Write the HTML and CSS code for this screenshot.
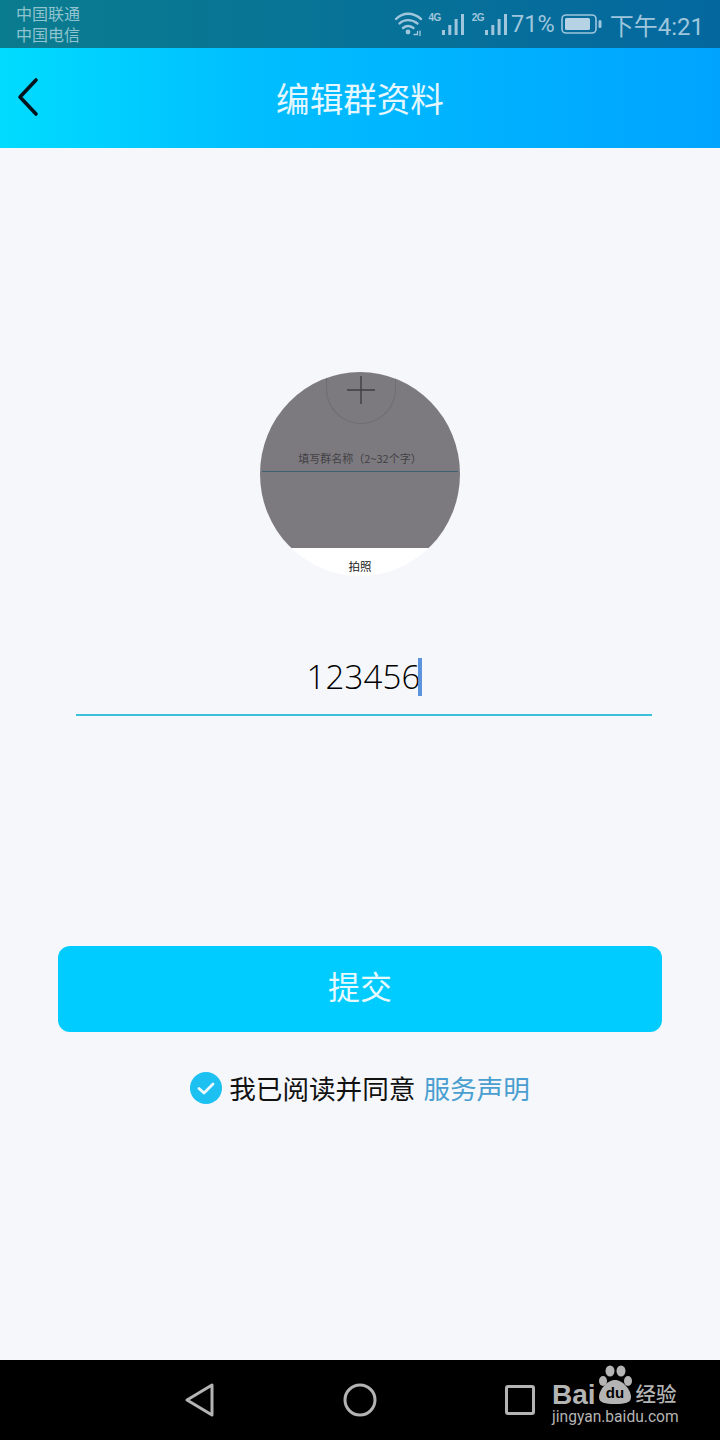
FILE: index.html
```html
<html>
	<head>
		<title>编辑群资料</title>
		<meta charset="utf-8">
		<link rel="stylesheet" href="styles.css">
	</head>
	<body>
		<div id="page">
			<div id="status-bar">
				<div class="carriers">
					<div>中国联通</div>
					<div>中国电信</div>
				</div>
				<div class="status-right">
					<svg class="wifi" width="30" height="26" viewBox="0 0 30 26" fill="none" stroke="#9fc6dc" stroke-width="2.400" stroke-linecap="round">
						<path d="M3 8C10 1 20 1 28 8"/>
						<path d="M6.500 12.500C11 8 19 8 24.500 12.500"/>
						<path d="M10 17C13 14.500 17 14.500 20.500 17"/>
						<circle cx="15" cy="21" r="2.400" fill="#9fc6dc" stroke="none"/>
						<path d="M21 23.500h3.500v-3M27 20v4.500" stroke-width="1.300"/>
					</svg>
					<div class="signal">
						<span class="net">4G</span>
						<svg width="22" height="24" viewBox="0 0 22 24" fill="#9fc6dc">
							<rect x="0" y="18" width="3" height="5"/>
							<rect x="6.300" y="13" width="3" height="10"/>
							<rect x="12.600" y="7" width="3" height="16"/>
							<rect x="19" y="2" width="3" height="21"/>
						</svg>
					</div>
					<div class="signal">
						<span class="net">2G</span>
						<svg width="22" height="24" viewBox="0 0 22 24" fill="#9fc6dc">
							<rect x="0" y="18" width="3" height="5"/>
							<rect x="6.300" y="13" width="3" height="10"/>
							<rect x="12.600" y="7" width="3" height="16"/>
							<rect x="19" y="2" width="3" height="21"/>
						</svg>
					</div>
					<span class="percent">71%</span>
					<svg class="battery" width="42" height="22" viewBox="0 0 42 22" fill="none">
						<rect x="1" y="2" width="34" height="18" rx="4" stroke="#9fc6dc" stroke-width="1.600"/>
						<rect x="4" y="5" width="25" height="12" rx="1.500" fill="#b5d3e4"/>
						<rect x="37.500" y="7" width="3" height="8" rx="1.500" fill="#9fc6dc"/>
					</svg>
					<span class="clock">下午4:21</span>
				</div>
			</div>

			<div id="header">
				<svg class="back" width="24" height="40" viewBox="0 0 24 40" fill="none" stroke="#04131c" stroke-width="3.600" stroke-linecap="round" stroke-linejoin="round">
					<path d="M20 3L4 20L20 37"/>
				</svg>
				<div class="title">编辑群资料</div>
			</div>

			<div id="content">
				<div class="avatar">
					<div class="avatar-shot">
						<div class="plus-tab">
							<svg width="28" height="28" viewBox="0 0 28 28" stroke="#3f3e42" stroke-width="1.400">
								<path d="M0 14H28M14 0V28"/>
							</svg>
						</div>
						<div class="hint">填写群名称（2~32个字）</div>
						<div class="hint-line"></div>
					</div>
					<div class="avatar-label">拍照</div>
				</div>

				<div class="name-input">
					<span class="name-value">123456</span><span class="caret"></span>
				</div>

				<div class="submit">提交</div>

				<div class="agree">
					<svg width="32" height="32" viewBox="0 0 32 32">
						<circle cx="16" cy="16" r="16" fill="#1cc1f2"/>
						<path d="M9 16.500L14 21L23 12" fill="none" stroke="#eefaff" stroke-width="2.800" stroke-linecap="round" stroke-linejoin="round"/>
					</svg>
					<span class="agree-text">我已阅读并同意</span>
					<span class="agree-link">服务声明</span>
				</div>
			</div>

			<div id="nav-bar">
				<svg class="nav-back" width="30" height="34" viewBox="0 0 30 34" fill="none" stroke="#b4b4b4" stroke-width="3" stroke-linejoin="round">
					<path d="M27 2V32L2 17Z"/>
				</svg>
				<svg class="nav-home" width="34" height="34" viewBox="0 0 34 34" fill="none" stroke="#b4b4b4" stroke-width="3">
					<circle cx="17" cy="17" r="15"/>
				</svg>
				<svg class="nav-recent" width="30" height="30" viewBox="0 0 30 30" fill="none" stroke="#b4b4b4" stroke-width="3" stroke-linejoin="round">
					<rect x="1.500" y="1.500" width="27" height="27" rx="1.500"/>
				</svg>
				<div class="baidu">
					<div class="baidu-top">
						<span class="bai">Bai</span>
						<svg class="paw" width="40" height="42" viewBox="0 0 40 42">
							<g fill="#b4b4b4">
								<ellipse cx="8" cy="16" rx="4" ry="5"/>
								<ellipse cx="15" cy="6" rx="4.500" ry="5.500"/>
								<ellipse cx="26" cy="6" rx="4.500" ry="5.500"/>
								<ellipse cx="33" cy="16" rx="4" ry="5"/>
								<path d="M20 15C12 15 4 25 4 32C4 38 10 39 20 39C30 39 36 38 36 32C36 25 28 15 20 15Z"/>
							</g>
							<text x="20" y="33" text-anchor="middle" class="paw-du">du</text>
						</svg>
						<span class="jy">经验</span>
					</div>
					<div class="baidu-url">jingyan.baidu.com</div>
				</div>
			</div>
		</div>
	</body>
</html>
```

FILE: styles.css
```css
body {
	margin: 0;
	font-family: "Noto Sans CJK SC", "Noto Sans", sans-serif;
}

#page {
	width: 720px;
	height: 1440px;
	display: flex;
	flex-direction: column;
	background-color: #f5f7fb;
	overflow: hidden;
}

#status-bar {
	height: 48px;
	flex: none;
	display: flex;
	justify-content: space-between;
	align-items: center;
	padding: 0 16px;
	background: linear-gradient(90deg, #0a7c8f, #04689f);
}

.carriers {
	font-size: 16px;
	line-height: 21px;
	color: #8fc4cf;
	margin-top: -1px;
}

.status-right {
	display: flex;
	align-items: center;
	color: #9fc6dc;
}

.wifi {
	margin-right: 5px;
}

.signal {
	display: flex;
	align-items: flex-start;
	margin-right: 8px;
}

.signal:last-of-type {
	margin-right: 4px;
}

.net {
	font-family: "Liberation Sans", sans-serif;
	font-size: 10px;
	font-weight: bold;
	line-height: 12px;
	letter-spacing: -0.5px;
	margin-right: 1px;
}

.percent {
	font-family: "Roboto", sans-serif;
	font-size: 23.500px;
	margin-right: 6px;
}

.battery {
	margin-right: 7px;
}

.clock {
	font-family: "Roboto", "Noto Sans CJK SC", sans-serif;
	font-size: 24px;
}

#header {
	height: 100px;
	flex: none;
	box-sizing: border-box;
	padding-bottom: 2px;
	position: relative;
	display: flex;
	justify-content: center;
	align-items: center;
	background: linear-gradient(90deg, #00dcff, #00beff 35%, #00a4ff);
}

.back {
	position: absolute;
	left: 16px;
	top: 29px;
}

.title {
	font-size: 33.600px;
	color: #e4f7ff;
}

#content {
	flex: 1;
	display: flex;
	flex-direction: column;
	align-items: center;
}

.avatar {
	width: 200px;
	height: 204px;
	margin-top: 224px;
	border-radius: 50%;
	background-color: #fff;
	overflow: hidden;
	display: flex;
	flex-direction: column;
}

.avatar-shot {
	height: 176px;
	flex: none;
	background-color: #7d7a7f;
	display: flex;
	flex-direction: column;
	align-items: center;
}

.plus-tab {
	width: 70px;
	height: 52px;
	flex: none;
	box-sizing: border-box;
	margin-left: 2px;
	border: 1px solid #6f6d72;
	border-top: none;
	border-radius: 0 0 35px 35px;
	display: flex;
	justify-content: center;
	padding-top: 4px;
}

.hint {
	font-size: 11px;
	line-height: 16px;
	color: #414044;
	margin-top: 26px;
}

.hint-line {
	width: 196px;
	height: 1px;
	flex: none;
	margin-top: 5px;
	background-color: #3f6070;
}

.avatar-label {
	font-size: 11.500px;
	line-height: 16px;
	color: #222;
	text-align: center;
	margin-top: 10px;
}

.name-input {
	width: 576px;
	height: 70px;
	flex: none;
	box-sizing: border-box;
	margin-top: 70px;
	margin-left: 8px;
	border-bottom: 2px solid #3cc0dc;
	display: flex;
	justify-content: center;
	align-items: flex-start;
	padding-top: 12px;
}

.name-value {
	font-family: "Open Sans", sans-serif;
	font-size: 33px;
	font-weight: 350;
	letter-spacing: 0.2px;
	line-height: 38px;
	color: #000;
}

.caret {
	width: 4px;
	height: 38px;
	margin-left: -3px;
	background-color: #5b94dc;
}

.submit {
	width: 604px;
	height: 86px;
	flex: none;
	box-sizing: border-box;
	margin-top: 230px;
	padding-bottom: 8px;
	border-radius: 12px;
	background-color: #00ccff;
	color: #e6f9ff;
	font-size: 32px;
	display: flex;
	justify-content: center;
	align-items: center;
}

.agree {
	display: flex;
	align-items: center;
	margin-top: 39px;
	font-size: 26.600px;
	line-height: 34px;
}

.agree-text {
	color: #111;
	margin-left: 7px;
}

.agree-link {
	color: #4a9fd0;
	margin-left: 8px;
}

#nav-bar {
	height: 80px;
	flex: none;
	position: relative;
	background-color: #000;
}

.nav-back {
	position: absolute;
	left: 185px;
	top: 23px;
}

.nav-home {
	position: absolute;
	left: 343px;
	top: 23px;
}

.nav-recent {
	position: absolute;
	left: 505px;
	top: 25px;
}

.baidu {
	position: absolute;
	left: 552px;
	top: 5px;
	color: #b4b4b4;
}

.baidu-top {
	display: flex;
	align-items: flex-end;
	height: 42px;
}

.bai {
	font-family: "Liberation Sans", sans-serif;
	font-weight: bold;
	font-size: 28px;
	line-height: 30px;
	margin-bottom: -3px;
}

.paw {
	margin-left: -1px;
}

.paw-du {
	font-family: "Liberation Sans", sans-serif;
	font-weight: bold;
	font-size: 15px;
	fill: #000;
}

.jy {
	font-size: 20.500px;
	font-weight: 500;
	line-height: 28px;
	margin-left: 1px;
}

.baidu-url {
	font-family: "Roboto", sans-serif;
	font-size: 15.600px;
	line-height: 18px;
	margin-top: 1px;
}
```
